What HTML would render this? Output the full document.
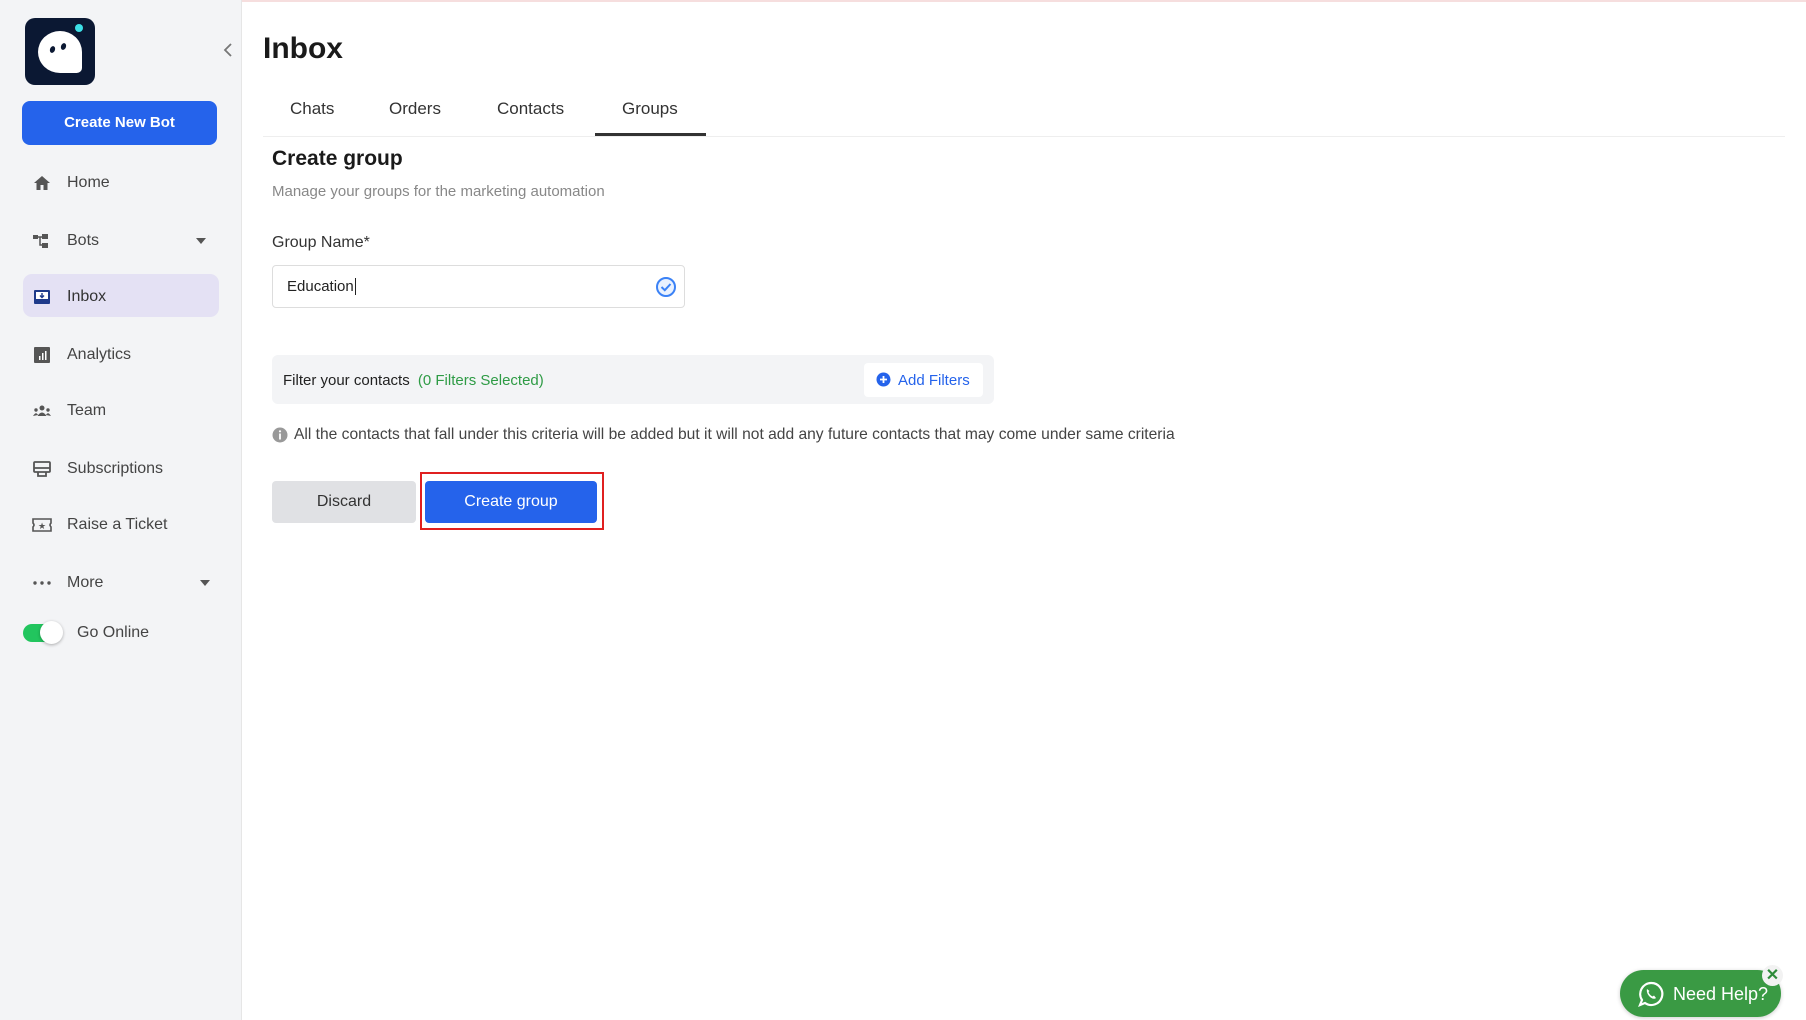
<!DOCTYPE html>
<html><head><meta charset="utf-8"><style>
*{margin:0;padding:0;box-sizing:border-box}
body{width:1806px;height:1020px;overflow:hidden;background:#fff;font-family:"Liberation Sans",sans-serif;position:relative;color:#222}
.a{position:absolute}
#side{left:0;top:0;width:242px;height:1020px;background:#f3f4f6;border-right:1px solid #e6e6e6}
.mi{position:absolute;left:0;width:242px;height:30px;font-size:16px;color:#444;display:flex;align-items:center}
.mi .ic{position:absolute;left:32px;width:20px;height:18px}
.mi span{position:absolute;left:67px}
.caret{position:absolute;left:196px;width:0;height:0;border-left:5px solid transparent;border-right:5px solid transparent;border-top:6px solid #555}
</style></head><body>
<div class="a" style="left:0;top:0;width:1806px;height:2px;background:#f6dede"></div>
<div id="side" class="a">
 <div class="a" style="left:25px;top:18px;width:70px;height:67px;background:#0b1833;border-radius:10px">
  <div class="a" style="left:13px;top:13px;width:44px;height:42px;background:#fff;border-radius:50% 50% 12% 50%"></div>
  <div class="a" style="left:25px;top:28px;width:5px;height:7px;background:#0b1833;border-radius:50%;transform:rotate(20deg)"></div>
  <div class="a" style="left:36px;top:25px;width:5px;height:7px;background:#0b1833;border-radius:50%;transform:rotate(20deg)"></div>
  <div class="a" style="left:50px;top:6px;width:8px;height:8px;background:#3de0e8;border-radius:50%"></div>
 </div>
 <svg class="a" style="left:222px;top:42px" width="12" height="16"><path d="M9 2 L3 8 L9 14" stroke="#777" stroke-width="1.8" fill="none"/></svg>
 <div class="a" style="left:22px;top:101px;width:195px;height:44px;background:#2563eb;border-radius:8px;color:#fff;font-weight:bold;font-size:15px;text-align:center;line-height:44px">Create New Bot</div>
 <div class="a" style="left:23px;top:274px;width:196px;height:43px;background:#e4e1f4;border-radius:9px"></div>
 <div class="mi" style="top:168px"><svg class="ic" viewBox="0 0 20 18"><path d="M10 2 L2 9 H4.5 V16 H8.5 V11 H11.5 V16 H15.5 V9 H18Z" fill="#555"/></svg><span>Home</span></div>
 <div class="mi" style="top:226px"><svg class="ic" viewBox="0 0 20 18"><rect x="1" y="3" width="5" height="4" fill="#555"/><rect x="10" y="2" width="6" height="5" fill="#555"/><rect x="10" y="11" width="6" height="5" fill="#555"/><path d="M6 5 H10 M8 5 V13 H10" stroke="#555" stroke-width="1.5" fill="none"/></svg><span>Bots</span><div class="caret" style="top:12px;left:196px"></div></div>
 <div class="mi" style="top:282px"><svg class="ic" viewBox="0 0 20 18"><rect x="2" y="2" width="16" height="14" rx="1" fill="#1e3a8a"/><rect x="4" y="4" width="12" height="7" fill="#fff"/><path d="M10 5 V9 M8 7.5 L10 9.5 L12 7.5" stroke="#1e3a8a" stroke-width="1.4" fill="none"/></svg><span style="color:#333">Inbox</span></div>
 <div class="mi" style="top:340px"><svg class="ic" viewBox="0 0 20 18"><rect x="2" y="1" width="16" height="16" rx="1" fill="#555"/><rect x="7" y="10" width="1.5" height="4" fill="#fff"/><rect x="10" y="7" width="1.5" height="7" fill="#fff"/><rect x="13" y="5" width="1.5" height="9" fill="#fff"/></svg><span>Analytics</span></div>
 <div class="mi" style="top:396px"><svg class="ic" viewBox="0 0 20 18"><circle cx="10" cy="6" r="2.5" fill="#555"/><path d="M5.5 14 Q10 7 14.5 14Z" fill="#555"/><circle cx="4" cy="8" r="1.7" fill="#555"/><circle cx="16" cy="8" r="1.7" fill="#555"/><path d="M1 14 Q4 9 6 13Z M19 14 Q16 9 14 13Z" fill="#555"/></svg><span>Team</span></div>
 <div class="mi" style="top:454px"><svg class="ic" viewBox="0 0 20 18"><rect x="2" y="2" width="16" height="10" rx="1" stroke="#555" stroke-width="1.8" fill="none"/><path d="M2 8 H18 M6 12 V16 H14 V12" stroke="#555" stroke-width="1.8" fill="none"/></svg><span>Subscriptions</span></div>
 <div class="mi" style="top:510px"><svg class="ic" viewBox="0 0 20 18"><path d="M1 3 H19 V7 Q17 9 19 11 V15 H1 V11 Q3 9 1 7Z" stroke="#555" stroke-width="1.6" fill="none"/><text x="10" y="13" font-size="9" text-anchor="middle" fill="#555">★</text></svg><span>Raise a Ticket</span></div>
 <div class="mi" style="top:568px"><svg class="ic" viewBox="0 0 20 18"><circle cx="3" cy="9" r="1.7" fill="#555"/><circle cx="10" cy="9" r="1.7" fill="#555"/><circle cx="17" cy="9" r="1.7" fill="#555"/></svg><span>More</span><div class="caret" style="top:12px;left:200px"></div></div>
 <div class="a" style="left:23px;top:624px;width:38px;height:18px;background:#22c55e;border-radius:9px"></div>
 <div class="a" style="left:40px;top:621px;width:23px;height:23px;background:#fff;border-radius:50%;box-shadow:0 1px 3px rgba(0,0,0,.3)"></div>
 <div class="a" style="left:77px;top:624px;font-size:16px;color:#444">Go Online</div>
</div>

<div class="a" style="left:263px;top:32px;font-size:30px;font-weight:bold;color:#1a1a1a">Inbox</div>
<div class="a" style="left:290px;top:99px;font-size:17px;color:#333">Chats</div>
<div class="a" style="left:389px;top:99px;font-size:17px;color:#333">Orders</div>
<div class="a" style="left:497px;top:99px;font-size:17px;color:#333">Contacts</div>
<div class="a" style="left:622px;top:99px;font-size:17px;color:#333">Groups</div>
<div class="a" style="left:263px;top:136px;width:1522px;height:1px;background:#eee"></div>
<div class="a" style="left:595px;top:133px;width:111px;height:3px;background:#333"></div>
<div class="a" style="left:272px;top:147px;font-size:21px;font-weight:bold;color:#1a1a1a">Create group</div>
<div class="a" style="left:272px;top:183px;font-size:15px;color:#888">Manage your groups for the marketing automation</div>
<div class="a" style="left:272px;top:234px;font-size:16px;color:#333">Group Name*</div>
<div class="a" style="left:272px;top:265px;width:413px;height:43px;border:1px solid #ddd;border-radius:4px"></div>
<div class="a" style="left:287px;top:278px;font-size:15px;color:#222">Education<span style="border-left:1px solid #222;margin-left:1px"></span></div>
<svg class="a" style="left:655px;top:276px" width="22" height="22"><circle cx="11" cy="11" r="9" stroke="#3b82f6" stroke-width="2" fill="#eaf2ff"/><path d="M6.5 11 L9.8 14.2 L15.5 8" stroke="#3b82f6" stroke-width="2" fill="none"/></svg>
<div class="a" style="left:272px;top:355px;width:722px;height:49px;background:#f3f4f6;border-radius:6px"></div>
<div class="a" style="left:283px;top:372px;font-size:15px;color:#222">Filter your contacts <span style="color:#2e9b45;margin-left:4px">(0 Filters Selected)</span></div>
<div class="a" style="left:864px;top:363px;width:119px;height:34px;background:#fff;border-radius:4px"></div>
<svg class="a" style="left:876px;top:372px" width="15" height="15"><circle cx="7.5" cy="7.5" r="7" fill="#2563eb"/><path d="M7.5 4 V11 M4 7.5 H11" stroke="#fff" stroke-width="1.8"/></svg>
<div class="a" style="left:898px;top:372px;font-size:15px;color:#2563eb">Add Filters</div>
<svg class="a" style="left:272px;top:427px" width="16" height="16"><circle cx="8" cy="8" r="7.5" fill="#999"/><rect x="7.1" y="6.5" width="1.8" height="6" fill="#fff"/><circle cx="8" cy="4.3" r="1.1" fill="#fff"/></svg>
<div class="a" style="left:294px;top:426px;font-size:15.6px;color:#444">All the contacts that fall under this criteria will be added but it will not add any future contacts that may come under same criteria</div>
<div class="a" style="left:272px;top:481px;width:144px;height:42px;background:#e0e1e4;border-radius:4px;text-align:center;line-height:42px;font-size:16px;color:#333">Discard</div>
<div class="a" style="left:420px;top:472px;width:184px;height:58px;border:2px solid #e02020"></div>
<div class="a" style="left:425px;top:481px;width:172px;height:42px;background:#2563eb;border-radius:4px;text-align:center;line-height:42px;font-size:16px;color:#fff">Create group</div>

<div class="a" style="left:1620px;top:970px;width:161px;height:47px;background:#3a9a44;border-radius:24px;box-shadow:0 1px 4px rgba(0,0,0,.2)"></div>
<svg class="a" style="left:1637px;top:980px" width="28" height="28" viewBox="0 0 28 28"><path d="M14 3 A11 11 0 1 1 8 23 L3 25 L5 20 A11 11 0 0 1 14 3Z" stroke="#fff" stroke-width="2.2" fill="none"/><path d="M10 9 Q9 13 13 17 Q17 20 19 18 L17 15.5 L15.5 16.5 Q12.5 15 11.5 12 L12.5 11 Z" fill="#fff"/></svg>
<div class="a" style="left:1673px;top:984px;font-size:18px;color:#fff">Need Help?</div>
<div class="a" style="left:1762px;top:965px;width:21px;height:21px;background:#f2f2f2;border-radius:50%;text-align:center;line-height:21px;font-size:16px;font-weight:bold;color:#2e8b3a">✕</div>
</body></html>
